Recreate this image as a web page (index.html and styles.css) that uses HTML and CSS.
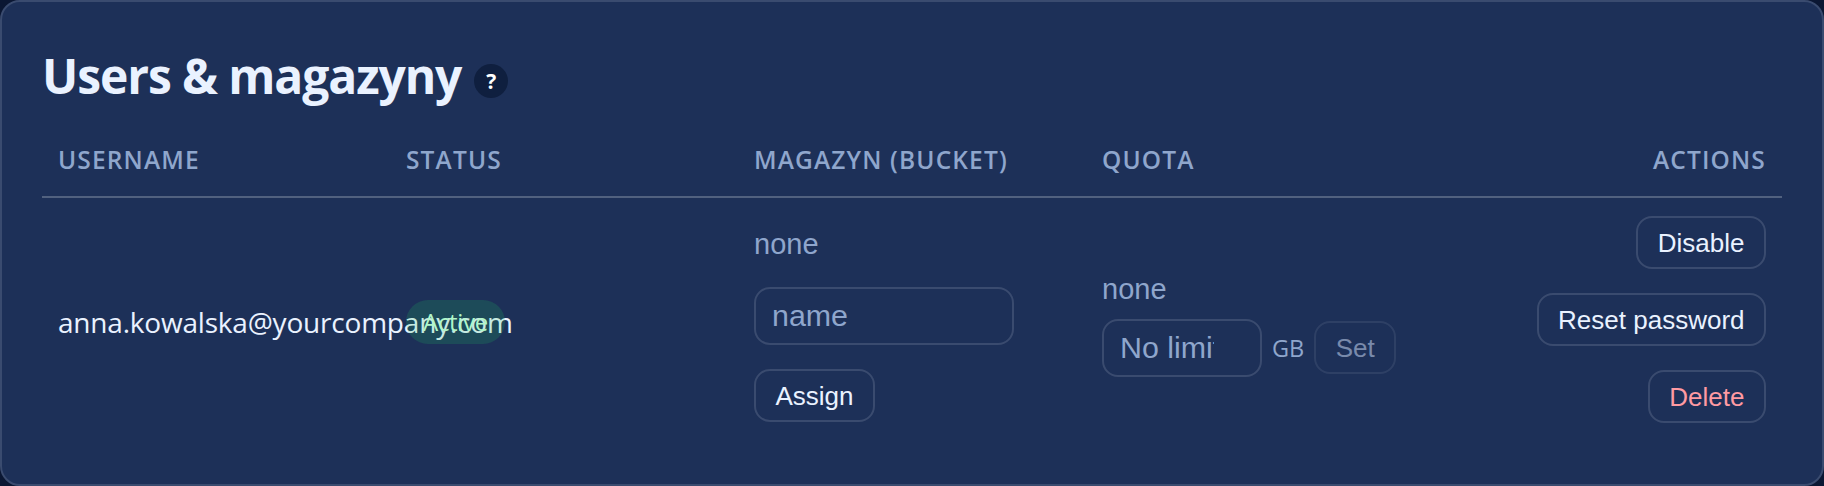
FILE: index.html
```html
<!DOCTYPE html>
<html lang="en">
<head>
<meta charset="utf-8">
<title>Users &amp; magazyny</title>
<link rel="stylesheet" href="styles.css">
</head>
<body>
<section class="card">
  <h2 class="title">Users &amp; magazyny <span class="help">?</span></h2>
  <table class="users">
    <thead>
      <tr>
        <th>Username</th>
        <th>Status</th>
        <th>Magazyn (bucket)</th>
        <th>Quota</th>
        <th class="right">Actions</th>
      </tr>
    </thead>
    <tbody>
      <tr>
        <td class="name low">anna.kowalska@yourcompany.com</td>
        <td class="low"><span class="pill">Active</span></td>
        <td>
          <div class="stack">
            <div class="muted bucket-now">none</div>
            <input class="field wide" placeholder="name">
            <div><button class="btn">Assign</button></div>
          </div>
        </td>
        <td>
          <div class="muted quota-now">none</div>
          <div class="quota-row">
            <input class="field narrow" placeholder="No limit">
            <span class="unit">GB</span>
            <button class="btn off">Set</button>
          </div>
        </td>
        <td class="right">
          <div class="actions">
            <button class="btn">Disable</button>
            <button class="btn">Reset password</button>
            <button class="btn danger">Delete</button>
          </div>
        </td>
      </tr>
    </tbody>
  </table>
</section>
</body>
</html>
```
FILE: styles.css
```css
* { box-sizing: border-box; }
html, body { margin: 0; height: 100%; background: #0b1733; }
body { font-family: "Open Sans", "Noto Sans", sans-serif; overflow: hidden; }
.card {
  height: 486px;
  padding: 36px 40px 0;
  background: #1d3058;
  border: 2px solid #3a4b6f;
  border-radius: 20px;
  color: #eaf2ff;
}
.title {
  display: flex;
  align-items: center;
  gap: 13px;
  margin: 0;
  height: 74px;
  font-size: 48px;
  font-weight: 700;
  letter-spacing: -1.1px;
  color: #eaf2ff;
}
.help {
  display: inline-flex;
  align-items: center;
  justify-content: center;
  width: 34px;
  height: 34px;
  margin-top: 12px;
  border-radius: 50%;
  background: #0f1f3f;
  color: #fff;
  font-size: 21px;
  letter-spacing: 0;
}
.users { width: 1740px; border-collapse: collapse; table-layout: fixed; }
th {
  height: 85px;
  padding: 10px 16px 0;
  text-align: left;
  text-transform: uppercase;
  font-size: 24.5px;
  font-weight: 600;
  letter-spacing: 1.15px;
  color: #8fa6cc;
  border-bottom: 2px solid #51617f;
}
td { padding: 18px 16px 16px; vertical-align: middle; }
td.low { padding-top: 23px; }
th.right, td.right { text-align: right; }
.name { font-size: 28px; white-space: nowrap; letter-spacing: -0.2px; color: #eaf2ff; }
.pill {
  display: inline-block;
  height: 44px;
  width: 99px;
  line-height: 44px;
  border-radius: 22px;
  background: rgba(34, 197, 94, 0.18);
  color: #b0f7ca;
  font-size: 24px;
  text-align: center;
  letter-spacing: -0.3px;
}
.stack { display: flex; flex-direction: column; align-items: flex-start; gap: 24px; }
.muted { font-family: "Liberation Sans", Arial, sans-serif; font-size: 29px; line-height: 38px; color: #8fa6cc; }
.bucket-now { padding-top: 7px; }
.quota-now { padding-top: 7px; margin-bottom: 11px; }
.field {
  height: 58px;
  padding: 0 16px;
  background: transparent;
  border: 2px solid #3a4b6f;
  border-radius: 16px;
  font-family: "Liberation Sans", Arial, sans-serif;
  font-size: 30.4px;
  color: #eaf2ff;
  outline: none;
}
.field::placeholder { color: #8fa6cc; opacity: 1; }
.wide { width: 260px; }
.narrow { width: 160px; padding-right: 46px; }
.quota-row { display: flex; align-items: center; gap: 10px; }
.unit { font-size: 23.5px; color: #8fa6cc; }
.btn {
  height: 53px;
  padding: 2px 19.5px 0;
  background: transparent;
  border: 2px solid #3a4b6f;
  border-radius: 16px;
  font-family: "Liberation Sans", Arial, sans-serif;
  font-size: 26px;
  color: #eaf2ff;
}
.off { opacity: 0.6; color: #b6c6e2; }
.danger { color: #ff9aa2; }
.actions { display: flex; flex-direction: column; align-items: flex-end; gap: 24px; }
```
